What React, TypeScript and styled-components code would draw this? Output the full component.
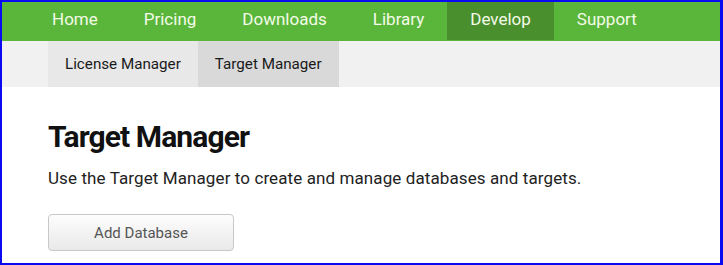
import React from "react";
import styled, { createGlobalStyle } from "styled-components";

const Global = createGlobalStyle`
  html, body { margin: 0; padding: 0; background: #fff; }
  body { font-family: Roboto, "Liberation Sans", sans-serif; }
  * { box-sizing: border-box; }
`;

const Frame = styled.div`
  width: 723px;
  height: 265px;
  border: 2px solid #0a0af0;
  border-right-width: 3px;
  overflow: hidden;
  background: #fff;
`;

const TopNav = styled.nav`
  display: flex;
  height: 39px;
  background: #5ab63b;
  padding-left: 27px;
  align-items: flex-start;
`;

const NavItem = styled.a<{ $active?: boolean }>`
  display: flex;
  align-items: center;
  height: 38px;
  padding: 0 23px 5px;
  font-size: 17px;
  color: #f4fbe8;
  text-decoration: none;
  background: ${(p) => (p.$active ? "#4a8f2d" : "transparent")};
`;

const SubNav = styled.nav`
  display: flex;
  height: 46px;
  background: #f1f1f1;
  padding-left: 46px;
`;

const SubItem = styled.a<{ $active?: boolean }>`
  display: flex;
  align-items: center;
  padding: 0 17px;
  font-size: 15.2px;
  color: #1a1a1a;
  text-decoration: none;
  background: ${(p) => (p.$active ? "#d9d9d9" : "#e8e8e8")};
`;

const Content = styled.main`
  padding: 30px 46px 0;
`;

const Title = styled.h1`
  margin: 0;
  font-size: 30px;
  font-weight: 700;
  letter-spacing: -0.9px;
  color: #111;
  line-height: 40px;
`;

const Lead = styled.p`
  margin: 9px 0 0;
  font-size: 17px;
  letter-spacing: 0.1px;
  color: #222;
  line-height: 24px;
`;

const Button = styled.button`
  display: block;
  margin-top: 24px;
  width: 186px;
  height: 37px;
  border: 1px solid #c8c8c8;
  border-radius: 4px;
  background: linear-gradient(#fdfdfd, #e9e9e9);
  font-family: Roboto, "Liberation Sans", sans-serif;
  font-size: 15px;
  color: #555;
`;

export default function App() {
  return (
    <>
      <Global />
      <Frame>
        <TopNav>
          <NavItem>Home</NavItem>
          <NavItem>Pricing</NavItem>
          <NavItem>Downloads</NavItem>
          <NavItem>Library</NavItem>
          <NavItem $active>Develop</NavItem>
          <NavItem>Support</NavItem>
        </TopNav>
        <SubNav>
          <SubItem>License Manager</SubItem>
          <SubItem $active>Target Manager</SubItem>
        </SubNav>
        <Content>
          <Title>Target Manager</Title>
          <Lead>Use the Target Manager to create and manage databases and targets.</Lead>
          <Button>Add Database</Button>
        </Content>
      </Frame>
    </>
  );
}
